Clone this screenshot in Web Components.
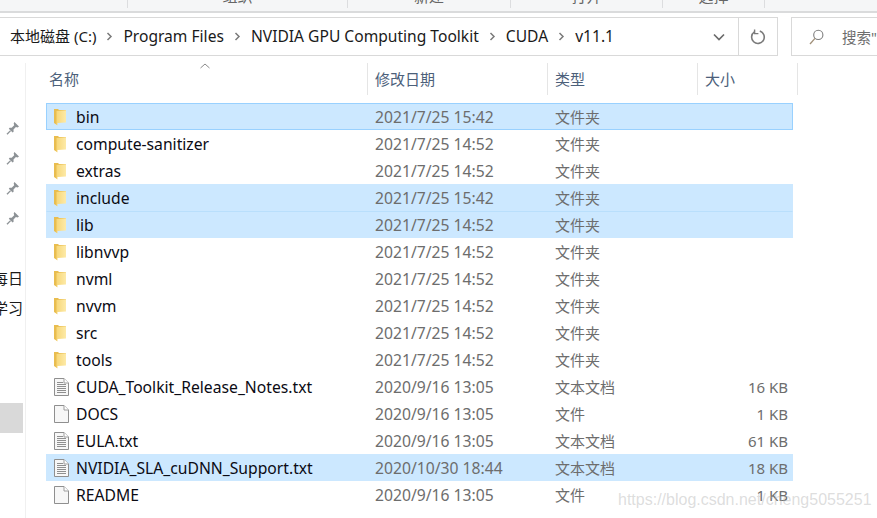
<!DOCTYPE html>
<html>
<head>
<meta charset="utf-8">
<style>
  html, body { margin: 0; padding: 0; background: #fff; }
  body {
    width: 877px; height: 518px; overflow: hidden; position: relative;
    font-family: "Noto Sans", "Noto Sans CJK SC", sans-serif;
    display: flex; flex-direction: column;
  }
</style>
</head>
<body>
<explorer-ribbon></explorer-ribbon>
<explorer-address></explorer-address>
<explorer-main>
  <explorer-nav slot="nav"></explorer-nav>
  <file-header></file-header>
  <file-row name="bin" date="2021/7/25 15:42" type="文件夹" state="focus"></file-row>
  <file-row name="compute-sanitizer" date="2021/7/25 14:52" type="文件夹"></file-row>
  <file-row name="extras" date="2021/7/25 14:52" type="文件夹"></file-row>
  <file-row name="include" date="2021/7/25 15:42" type="文件夹" state="selected"></file-row>
  <file-row name="lib" date="2021/7/25 14:52" type="文件夹" state="selected" joined></file-row>
  <file-row name="libnvvp" date="2021/7/25 14:52" type="文件夹"></file-row>
  <file-row name="nvml" date="2021/7/25 14:52" type="文件夹"></file-row>
  <file-row name="nvvm" date="2021/7/25 14:52" type="文件夹"></file-row>
  <file-row name="src" date="2021/7/25 14:52" type="文件夹"></file-row>
  <file-row name="tools" date="2021/7/25 14:52" type="文件夹"></file-row>
  <file-row icon="text" name="CUDA_Toolkit_Release_Notes.txt" date="2020/9/16 13:05" type="文本文档" size="16 KB"></file-row>
  <file-row icon="blank" name="DOCS" date="2020/9/16 13:05" type="文件" size="1 KB"></file-row>
  <file-row icon="text" name="EULA.txt" date="2020/9/16 13:05" type="文本文档" size="61 KB"></file-row>
  <file-row icon="text" name="NVIDIA_SLA_cuDNN_Support.txt" date="2020/10/30 18:44" type="文本文档" size="18 KB" state="selected"></file-row>
  <file-row icon="blank" name="README" date="2020/9/16 13:05" type="文件" size="1 KB"></file-row>
</explorer-main>
<blog-watermark>https://blog.csdn.net/cheng5055251</blog-watermark>

<script>
// Ribbon strip, only the bottom of the group labels is still visible
class ExplorerRibbon extends HTMLElement {
  constructor() {
    super();
    this.attachShadow({ mode: 'open' });
    const groups = [['组织', 220], ['新建', 163], ['打开', 152], ['选择', 102]];
    this.shadowRoot.innerHTML = `
      <style>
        :host { display: flex; height: 11px; background: #f5f6f7; border-bottom: 2px solid #dadbdc; overflow: hidden; }
        .g { box-sizing: border-box; border-right: 1px solid #dcdddf; height: 8px; overflow: hidden; text-align: center; flex: none; }
        .g span { display: block; margin-top: -13px; font-size: 15px; line-height: 18px; color: #666; }
      </style>
      <div class="g" style="width:128px"></div>
      ${groups.map(([t, w]) => `<div class="g" style="width:${w}px"><span>${t}</span></div>`).join('')}
    `;
  }
}

// Breadcrumb bar and search box
class ExplorerAddress extends HTMLElement {
  constructor() {
    super();
    this.attachShadow({ mode: 'open' });
    const chev = `<svg width="7" height="9" viewBox="0 0 7 9"><path d="M1.5 1 L5 4.5 L1.5 8" fill="none" stroke="#7a7a7a" stroke-width="1.5"/></svg>`;
    const crumbs = ['本地磁盘 (C:)', 'Program Files', 'NVIDIA GPU Computing Toolkit', 'CUDA', 'v11.1'];
    this.shadowRoot.innerHTML = `
      <style>
        :host { display: flex; height: 39px; margin-top: 4px; font-size: 15.6px; color: #1a1a1a; }
        .bar { box-sizing: border-box; width: 778px; display: flex; align-items: center; border: 1px solid #d9d9d9; border-left: 0; padding-left: 10px; }
        .crumbs { flex: 1; display: flex; align-items: center; gap: 10px; white-space: nowrap; margin-top: -2px; }
        .crumbs svg { margin-top: 1px; }
        .cjk { font-size: 15px; }
        .drop { width: 38px; display: flex; justify-content: center; }
        .refresh { box-sizing: border-box; width: 39px; height: 100%; border-left: 1px solid #d9d9d9; display: flex; align-items: center; justify-content: center; }
        .search { box-sizing: border-box; margin-left: 13px; flex: 1; display: flex; align-items: center; gap: 18px; padding-left: 17px; border: 1px solid #d9d9d9; border-right: 0; font-size: 14.5px; color: #6d6d6d; white-space: nowrap; overflow: hidden; }
      </style>
      <div class="bar">
        <div class="crumbs">${crumbs.map((c, i) => (i ? chev : '') + `<span class="${i ? '' : 'cjk'}">${c}</span>`).join('')}</div>
        <div class="drop"><svg width="12" height="8" viewBox="0 0 12 8"><path d="M1 1.5 L6 6.5 L11 1.5" fill="none" stroke="#6b6b6b" stroke-width="1.7"/></svg></div>
        <div class="refresh"><svg width="16" height="16" viewBox="0 0 16 16"><path d="M9.8 2.1 A6.3 6.3 0 1 1 4.4 2.9" fill="none" stroke="#7b7b7b" stroke-width="1.6"/><path d="M4.6 0.6 V4.6 H8.4" fill="none" stroke="#7b7b7b" stroke-width="1.4"/></svg></div>
      </div>
      <div class="search">
        <svg width="15" height="16" viewBox="0 0 15 16"><circle cx="9.3" cy="5.9" r="4.6" fill="none" stroke="#7d7d7d" stroke-width="1.1"/><path d="M6 9.4 L1 15" stroke="#a08f78" stroke-width="1.3"/></svg>
        <span>搜索"</span>
      </div>
    `;
  }
}

// Two columns: navigation pane and the file list
class ExplorerMain extends HTMLElement {
  constructor() {
    super();
    this.attachShadow({ mode: 'open' });
    this.shadowRoot.innerHTML = `
      <style>
        :host { display: flex; flex: 1; padding-top: 7px; min-height: 0; }
        .nav { width: 25px; flex: none; border-right: 1px solid #f0f0f0; }
        .list { padding-left: 20px; width: 772px; flex: none; }
      </style>
      <div class="nav"><slot name="nav"></slot></div>
      <div class="list"><slot></slot></div>
    `;
  }
}

class ExplorerNav extends HTMLElement {
  constructor() {
    super();
    this.attachShadow({ mode: 'open' });
    const pin = `<svg width="14" height="14" viewBox="0 0 14 14"><path d="M8.4 1 L13 5.6 L11.6 6.4 L9.9 6 L7.5 8.6 L7.6 10.7 L6.6 11.5 L2.8 7.7 L3.6 6.7 L5.7 6.8 L8.2 4.2 L7.7 2.5 Z" fill="#8d9296"/><path d="M4.6 9.6 L1 13.2" stroke="#8d9296" stroke-width="1.3"/></svg>`;
    this.shadowRoot.innerHTML = `
      <style>
        :host { display: block; width: 25px; overflow: hidden; padding-top: 50px; font-size: 15px; color: #1a1a1a; }
        .row { height: 30px; display: flex; align-items: center; }
        .pin { justify-content: center; }
        .clip { justify-content: flex-end; white-space: nowrap; padding-right: 2px; }
        .skip { height: 29px; }
        .gap { height: 81px; }
        .hot { height: 30px; width: 23px; background: #d9d9d9; }
      </style>
      ${`<div class="row pin">${pin}</div>`.repeat(4)}
      <div class="skip"></div>
      <div class="row clip"><span>每日</span></div>
      <div class="row clip"><span>学习</span></div>
      <div class="gap"></div>
      <div class="hot"></div>
    `;
  }
}

class FileHeader extends HTMLElement {
  constructor() {
    super();
    this.attachShadow({ mode: 'open' });
    this.shadowRoot.innerHTML = `
      <style>
        :host { display: grid; grid-template-columns: 322px 180px 150px 100px; height: 32px; margin-bottom: 8px; font-size: 15px; color: #4c607a; position: relative; }
        .c { box-sizing: border-box; border-right: 1px solid #e5e5e5; padding-left: 7px; padding-bottom: 1px; display: flex; align-items: center; }
        .c:first-of-type { padding-left: 3px; }
        svg { position: absolute; left: 154px; top: 0; }
      </style>
      <div class="c">名称</div><div class="c">修改日期</div><div class="c">类型</div><div class="c">大小</div>
      <svg width="10" height="6" viewBox="0 0 10 6"><path d="M0.5 5 L5 1 L9.5 5" fill="none" stroke="#8a8a8a" stroke-width="1"/></svg>
    `;
  }
}

const ICONS = {
  folder: `<svg width="13" height="18" viewBox="0 0 13 18"><defs><linearGradient id="f" x1="0" x2="1" y1="0" y2="0"><stop offset="0" stop-color="#f7d778"/><stop offset="1" stop-color="#fdeaa8"/></linearGradient></defs><path d="M0 1 H4 L5 2 H12 V14 H3 V17 L0 15 Z" fill="#e9bd4f"/><path d="M2.5 3 L12 2.2 V14.5 L3.5 15 V17.6 L2.5 16.8 Z" fill="url(#f)"/></svg>`,
  blank: `<svg width="15" height="18" viewBox="0 0 15 18"><path d="M.5 .5 H10 L14.5 5 V17.5 H.5 Z" fill="#f7f7f7" stroke="#8f8f8f"/><path d="M10 .5 V5 H14.5" fill="#fff" stroke="#9d9d9d"/></svg>`,
  text: `<svg width="15" height="18" viewBox="0 0 15 18"><path d="M.5 .5 H10 L14.5 5 V17.5 H.5 Z" fill="#f7f7f7" stroke="#8f8f8f"/><path d="M10 .5 V5 H14.5" fill="#fff" stroke="#9d9d9d"/><path d="M3 4.5 H9 M3 6.5 H12 M3 8.5 H12 M3 10.5 H12 M3 12.5 H12 M3 14.5 H12" stroke="#8f8f8f" stroke-width="1"/></svg>`
};

class FileRow extends HTMLElement {
  constructor() {
    super();
    this.attachShadow({ mode: 'open' });
  }

  connectedCallback() {
    const get = n => this.getAttribute(n) || '';
    const icon = ICONS[get('icon') || 'folder'];
    this.shadowRoot.innerHTML = `
      <style>
        :host { box-sizing: border-box; display: grid; grid-template-columns: 328px 180px 150px 83px; align-items: center; height: 27px; width: 747px; border: 1px solid transparent; font-size: 15.7px; color: #6d6d6d; white-space: nowrap; }
        :host([state="selected"]) { background: #cce8ff; border-color: #cce8ff; }
        :host([joined]) { border-top-color: #b9dffc; }
        :host([state="focus"]) { background: #cce8ff; border-color: #99d1ff; }
        .name { display: flex; align-items: center; color: #0b0b14; }
        .ico { width: 29px; display: flex; justify-content: flex-start; padding-left: 7px; box-sizing: border-box; }
        .type, .size { font-size: 15px; }
        .size { text-align: right; }
      </style>
      <div class="name"><span class="ico">${icon}</span><span>${get('name')}</span></div>
      <div>${get('date')}</div>
      <div class="type">${get('type')}</div>
      <div class="size">${get('size')}</div>
    `;
  }
}

// CSDN image watermark, lies over the last row
class BlogWatermark extends HTMLElement {
  constructor() {
    super();
    this.attachShadow({ mode: 'open' });
    this.shadowRoot.innerHTML = `
      <style>
        :host { position: absolute; left: 618px; top: 490px; font: 16px/20px "Liberation Sans", sans-serif; color: rgba(180,180,180,.45); white-space: nowrap; }
      </style>
      <slot></slot>
    `;
  }
}

customElements.define('explorer-ribbon', ExplorerRibbon);
customElements.define('explorer-address', ExplorerAddress);
customElements.define('explorer-main', ExplorerMain);
customElements.define('explorer-nav', ExplorerNav);
customElements.define('file-header', FileHeader);
customElements.define('file-row', FileRow);
customElements.define('blog-watermark', BlogWatermark);
</script>
</body>
</html>
